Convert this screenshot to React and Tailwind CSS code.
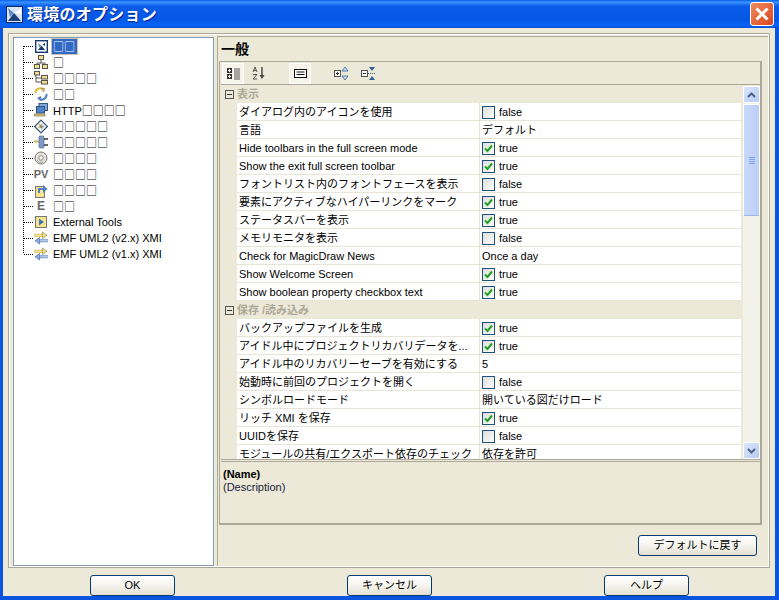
import React from "react";

const displayRows = [
  ["ダイアログ内のアイコンを使用", false],
  ["言語", "デフォルト"],
  ["Hide toolbars in the full screen mode", true],
  ["Show the exit full screen toolbar", true],
  ["フォントリスト内のフォントフェースを表示", false],
  ["要素にアクティブなハイパーリンクをマーク", true],
  ["ステータスバーを表示", true],
  ["メモリモニタを表示", false],
  ["Check for MagicDraw News", "Once a day"],
  ["Show Welcome Screen", true],
  ["Show boolean property checkbox text", true],
];

const saveRows = [
  ["バックアップファイルを生成", true],
  ["アイドル中にプロジェクトリカバリデータを...", true],
  ["アイドル中のリカバリーセーブを有効にする", "5"],
  ["始動時に前回のプロジェクトを開く", false],
  ["シンボルロードモード", "開いている図だけロード"],
  ["リッチ XMI を保存", true],
  ["UUIDを保存", false],
  ["モジュールの共有/エクスポート依存のチェック", "依存を許可"],
];

function TitleIcon() {
  return (
    <svg width="17" height="17" viewBox="0 0 17 17">
      <rect x="0.5" y="0.5" width="16" height="16" fill="#dbe6f5" stroke="#0b2a66" />
      <path d="M2 15 L8 7 L15 15 Z" fill="#1d3f7c" />
      <path d="M2 2 L8 7 L4 11 Z" fill="#5f87c5" />
      <path d="M8 7 L15 3 L15 8 Z" fill="#ffffff" />
    </svg>
  );
}

function Icon({ name }) {
  if (name === "options")
    return (
      <svg width="13" height="13" viewBox="0 0 13 13">
        <rect x="0.7" y="0.7" width="11.6" height="11.6" fill="#fff" stroke="#16396f" strokeWidth="1.4" />
        <path d="M3 10 L6.5 5.5 L10 10 Z" fill="#16396f" />
        <path d="M3 3 L6.5 5.5 L4 7.5 Z" fill="#6f8fbf" />
        <path d="M7.5 4.5 L10 3 L10 6 Z" fill="#16396f" />
      </svg>
    );
  if (name === "hierarchy")
    return (
      <svg width="14" height="14" viewBox="0 0 14 14">
        <path d="M7 5 V8 M3 10 V8 H11 V10" stroke="#555" fill="none" />
        <rect x="4.5" y="0.5" width="5" height="4" fill="#f3dc8b" stroke="#555" />
        <rect x="0.5" y="9.5" width="5" height="4" fill="#f3dc8b" stroke="#555" />
        <rect x="8.5" y="9.5" width="5" height="4" fill="#f3dc8b" stroke="#555" />
      </svg>
    );
  if (name === "tree")
    return (
      <svg width="14" height="14" viewBox="0 0 14 14">
        <path d="M2 4 V11 H7 M2 7 H7" stroke="#555" fill="none" />
        <rect x="0.5" y="0.5" width="5" height="3.5" fill="#f3dc8b" stroke="#555" />
        <rect x="7.5" y="4.5" width="6" height="3.5" fill="#f3dc8b" stroke="#555" />
        <rect x="7.5" y="9.5" width="6" height="3.5" fill="#f3dc8b" stroke="#555" />
      </svg>
    );
  if (name === "refresh")
    return (
      <svg width="14" height="14" viewBox="0 0 14 14" fill="none">
        <path d="M1.5 6 A4.5 4.5 0 0 1 9 2.5" stroke="#e4c23c" strokeWidth="2" />
        <path d="M7 1 L11 1.5 L9.5 5 Z" fill="#e4c23c" stroke="#666" strokeWidth="0.4" />
        <path d="M12.5 7 A5 5 0 0 1 5 12" stroke="#4f7fc4" strokeWidth="2" />
        <path d="M7 9 L3 11 L7 14 Z" fill="#4f7fc4" />
      </svg>
    );
  if (name === "network")
    return (
      <svg width="14" height="14" viewBox="0 0 14 14">
        <rect x="5" y="0.5" width="8.5" height="7" fill="#7fa6dd" stroke="#33557f" />
        <rect x="2.5" y="3.5" width="8" height="6.5" fill="#4f83cc" stroke="#33557f" />
        <path d="M0.5 11 H11 V13 H0.5 Z" fill="#e6d28a" stroke="#7a6a33" strokeWidth="0.7" />
      </svg>
    );
  if (name === "diamond")
    return (
      <svg width="15" height="15" viewBox="0 0 15 15">
        <path d="M7.5 0.7 L14.3 7.5 L7.5 14.3 L0.7 7.5 Z" fill="#f4f1de" stroke="#33557f" strokeWidth="1.2" />
        <path d="M7.5 4 L11 7.5 L7.5 11 Z" fill="#9db7da" />
        <path d="M6 5 L8 9 M5 8 H9" stroke="#8a6a2a" />
      </svg>
    );
  if (name === "plug")
    return (
      <svg width="14" height="14" viewBox="0 0 14 14">
        <path d="M0 6.5 H5" stroke="#c9b65a" strokeWidth="2" />
        <rect x="5" y="1" width="5" height="12" rx="1" fill="#7d9ac4" stroke="#5b6f8f" strokeWidth="0.7" />
        <path d="M10 4 H14 M10 10 H14" stroke="#333" strokeWidth="1.6" />
      </svg>
    );
  if (name === "disc")
    return (
      <svg width="14" height="14" viewBox="0 0 14 14">
        <circle cx="7" cy="7" r="6" fill="#e3e1d8" stroke="#777" />
        <circle cx="7" cy="7" r="2.2" fill="#fff" stroke="#888" />
        <path d="M3 9 A5 5 0 0 0 9 11" stroke="#aaa" fill="none" />
      </svg>
    );
  if (name === "pv")
    return <span className="text-[11px] leading-none font-bold text-[#666] whitespace-nowrap">PV</span>;
  if (name === "e")
    return <span className="text-[12px] leading-none font-bold text-[#666]">E</span>;
  if (name === "export")
    return (
      <svg width="14" height="15" viewBox="0 0 14 15">
        <rect x="1.5" y="3.5" width="9" height="11" fill="#f7e48e" stroke="#777" />
        <path d="M5 10 V6 H9" stroke="#4f7fc4" strokeWidth="2" fill="none" />
        <path d="M9 2 L13.5 6 L9 10 Z" fill="#4f7fc4" />
      </svg>
    );
  if (name === "play")
    return (
      <svg width="14" height="14" viewBox="0 0 14 14">
        <rect x="1.5" y="1.5" width="11" height="11" fill="#f7e48e" stroke="#777" />
        <path d="M5 3.5 L10 7 L5 10.5 Z" fill="#3f73bd" />
      </svg>
    );
  return (
    <svg width="15" height="14" viewBox="0 0 15 14">
      <path d="M0 3 H10 M0 5 H10" stroke="#d8c34a" strokeWidth="1.2" />
      <path d="M9 0.5 L14 4 L9 7.5 Z" fill="#efe08a" stroke="#8c7a2a" strokeWidth="0.6" />
      <path d="M5 9 H15 M5 11 H15" stroke="#6e93c9" strokeWidth="1.2" />
      <path d="M6 6.5 L1 10 L6 13.5 Z" fill="#8fb0de" stroke="#44658f" strokeWidth="0.6" />
    </svg>
  );
}

// prefix is latin text, boxes are the missing-glyph squares of the original
const treeItems = [
  ["options", "", "□□"],
  ["hierarchy", "", "□"],
  ["tree", "", "□□□□"],
  ["refresh", "", "□□"],
  ["network", "HTTP", "□□□□"],
  ["diamond", "", "□□□□□"],
  ["plug", "", "□□□□□"],
  ["disc", "", "□□□□"],
  ["pv", "", "□□□□"],
  ["export", "", "□□□□"],
  ["e", "", "□□"],
  ["play", "External Tools", ""],
  ["emf", "EMF UML2 (v2.x) XMI", ""],
  ["emf", "EMF UML2 (v1.x) XMI", ""],
];

function Tree() {
  return (
    <div className="w-[201px] shrink-0 bg-white border border-[#7f9db9] pl-[9px] flex">
      <svg width="11" height="224" viewBox="0 0 11 224" className="shrink-0">
        <path d="M0.5 8 V216" stroke="#000" strokeDasharray="1 1" />
        {treeItems.map((item, i) => (
          <path key={i} d={`M1 ${8.5 + i * 16} H11`} stroke="#000" strokeDasharray="1 1" />
        ))}
      </svg>
      <div className="flex flex-col">
        {treeItems.map(([icon, prefix, boxes], i) => (
          <div key={i} className="h-4 flex items-center">
            <div className="w-[14px] h-4 flex items-center justify-center shrink-0">
              <Icon name={icon} />
            </div>
            <span
              className={
                "ml-[4px] pl-[1px] pr-[2px] h-[15px] leading-[15px] text-[11px] whitespace-nowrap " +
                (i === 0 ? "bg-[#316ac5] text-white outline outline-[#c6c3b5]" : "text-black")
              }
            >
              {prefix}
              {boxes && <span className="font-['Noto_Sans_CJK_JP',sans-serif]">{boxes}</span>}
            </span>
          </div>
        ))}
      </div>
    </div>
  );
}

function Check({ on }) {
  return (
    <span className="w-[13px] h-[13px] shrink-0 border border-[#1c5180] bg-linear-to-br from-[#dcdcd7] to-white flex items-center justify-center">
      {on && (
        <svg width="9" height="9" viewBox="0 0 9 9">
          <path d="M1 4.5 L3.5 7 L8 1.5" fill="none" stroke="#21a121" strokeWidth="2" />
        </svg>
      )}
    </span>
  );
}

function Row({ name, value }) {
  const isBool = typeof value === "boolean";
  return (
    <div className="h-[18px] shrink-0 flex text-[11px] leading-[16px]">
      <div className="w-[16px] shrink-0 bg-[#ece9d8]" />
      <div className="w-[243px] shrink-0 bg-white border-b border-r border-[#e8e5d6] pl-[2px] pt-[1px] whitespace-nowrap overflow-hidden">
        {name}
      </div>
      <div className="flex-1 bg-white border-b border-[#e8e5d6] pl-[2px] pt-[1px] flex items-center gap-[4px] whitespace-nowrap">
        {isBool ? <Check on={value} /> : null}
        <span>{isBool ? String(value) : value}</span>
      </div>
    </div>
  );
}

function Group({ title }) {
  return (
    <div className="h-[18px] shrink-0 flex items-center bg-[#ece9d8]">
      <span className="w-[9px] h-[9px] ml-[4px] border border-[#555] flex items-center justify-center">
        <span className="w-[5px] h-[1px] bg-[#333]" />
      </span>
      <span className="ml-[3px] text-[11px] font-bold text-[#aca899]">{title}</span>
    </div>
  );
}

function ToolButton({ active, children, className }) {
  return (
    <div
      className={
        "h-[21px] flex items-center justify-center " +
        (active ? "w-[22px] bg-[#f5f3ea] border border-white " : "w-[20px] ") +
        (className || "")
      }
    >
      {children}
    </div>
  );
}

function Toolbar() {
  return (
    <div className="h-[23px] shrink-0 flex items-center pl-[1px] border-b border-[#aca899]">
      <ToolButton active>
        <svg width="13" height="13" viewBox="0 0 13 13">
          <rect x="0" y="1" width="5" height="5" fill="#333" />
          <rect x="0" y="7" width="5" height="5" fill="#333" />
          <path d="M1 3.5 H4 M2.5 2 V5 M1 9.5 H4 M2.5 8 V11" stroke="#fff" />
          <path d="M7 2 H13 M7 4 H13 M7 6 H13 M7 8 H13 M7 10 H13 M7 12 H13" stroke="#555" />
        </svg>
      </ToolButton>
      <ToolButton className="ml-[5px]">
        <svg width="14" height="14" viewBox="0 0 14 14">
          <path d="M1 6 L3 1 L5 6 M2 4.5 H4" stroke="#555" fill="none" />
          <path d="M1 8.5 H5 L1 13 H5" stroke="#555" fill="none" />
          <path d="M10 1 V10" stroke="#444" strokeWidth="1.4" />
          <path d="M7.5 9 H12.5 L10 13 Z" fill="#444" />
        </svg>
      </ToolButton>
      <ToolButton active className="ml-[20px]">
        <svg width="13" height="9" viewBox="0 0 13 9">
          <rect x="0.5" y="0.5" width="12" height="8" fill="#fff" stroke="#111" />
          <path d="M2.5 3 H10.5 M2.5 5.5 H10.5" stroke="#111" />
        </svg>
      </ToolButton>
      <ToolButton className="ml-[21px]">
        <svg width="16" height="15" viewBox="0 0 16 15">
          <rect x="0.5" y="4.5" width="6" height="6" fill="#fff" stroke="#555" />
          <path d="M2 7.5 H5 M3.5 6 V9" stroke="#333" />
          <path d="M8 5 L11 1 L14 5 Z" fill="#cfe0f5" stroke="#2f5f99" strokeWidth="0.8" />
          <path d="M8 10 L11 14 L14 10 Z" fill="#cfe0f5" stroke="#2f5f99" strokeWidth="0.8" />
        </svg>
      </ToolButton>
      <ToolButton className="ml-[7px]">
        <svg width="16" height="15" viewBox="0 0 16 15">
          <rect x="0.5" y="4.5" width="6" height="6" fill="#fff" stroke="#555" />
          <path d="M2 7.5 H5" stroke="#333" />
          <path d="M8 1 L11 5 L14 1 Z" fill="#2f5f99" />
          <path d="M8 14 L11 10 L14 14 Z" fill="#2f5f99" />
          <path d="M7 7.5 H15" stroke="#2f5f99" strokeDasharray="1 1" />
        </svg>
      </ToolButton>
    </div>
  );
}

function ScrollButton({ down }) {
  return (
    <div className="h-[17px] shrink-0 rounded-[2px] border border-white bg-linear-to-br from-[#dbe6fb] to-[#b6ccf6] flex items-center justify-center">
      <svg width="9" height="6" viewBox="0 0 9 6">
        <path
          d={down ? "M1 1 L4.5 4.5 L8 1" : "M1 5 L4.5 1.5 L8 5"}
          fill="none"
          stroke="#4d6185"
          strokeWidth="2"
        />
      </svg>
    </div>
  );
}

function Scrollbar() {
  return (
    <div className="w-[17px] ml-[2px] shrink-0 flex flex-col bg-[#f3f2ea] mt-[1px]">
      <ScrollButton />
      <div className="h-[112px] shrink-0 mt-[1px] rounded-[2px] border border-white border-b-[#9ab4e6] bg-linear-to-r from-[#c9d8fa] to-[#bdcff8] flex flex-col items-center justify-center gap-[1px]">
        <span className="w-[6px] h-[1px] bg-[#7fa4ee]" />
        <span className="w-[6px] h-[1px] bg-[#7fa4ee]" />
        <span className="w-[6px] h-[1px] bg-[#7fa4ee]" />
        <span className="w-[6px] h-[1px] bg-[#7fa4ee]" />
      </div>
      <div className="flex-1" />
      <ScrollButton down />
    </div>
  );
}

function PropertyTable() {
  return (
    <div className="h-[375px] shrink-0 flex border-b border-[#aca899] overflow-hidden">
      <div className="w-[520px] shrink-0 flex flex-col overflow-hidden">
        <Group title="表示" />
        {displayRows.map(([n, v]) => (
          <Row key={n} name={n} value={v} />
        ))}
        <Group title="保存 /読み込み" />
        {saveRows.map(([n, v]) => (
          <Row key={n} name={n} value={v} />
        ))}
      </div>
      <Scrollbar />
    </div>
  );
}

function XpButton({ children, className }) {
  return (
    <button className={"h-[21px] rounded-[3px] border border-[#003c74] bg-linear-to-b from-white via-[#f5f4ee] to-[#e3e0d2] text-[11px] leading-none text-black " + (className || "")}>
      {children}
    </button>
  );
}

export default function App() {
  return (
    <div className="w-[779px] h-[600px] overflow-hidden flex flex-col bg-[#0a55e0] text-black font-['Liberation_Sans','Noto_Sans_CJK_JP',sans-serif]">
      <div className="h-[28px] shrink-0 flex items-center pl-[6px] pr-[5px] bg-[linear-gradient(180deg,#0a5fe6_0%,#3a93ff_8%,#0a5ce8_22%,#0458e6_70%,#0a63f2_90%,#0551d8_100%)]">
        <TitleIcon />
        <span className="ml-[4px] mt-[1px] text-[16px] font-bold text-white leading-none tracking-[0.25px] [text-shadow:1px_1px_0_#0b2a8a]">
          環境のオプション
        </span>
        <div className="ml-auto w-[24px] h-[24px] rounded-[3px] border border-white bg-linear-to-br from-[#ee8a5e] to-[#d9431c] flex items-center justify-center">
          <svg width="16" height="16" viewBox="0 0 16 16">
            <path d="M2.5 2.5 L13.5 13.5 M13.5 2.5 L2.5 13.5" stroke="#fff" strokeWidth="3" />
          </svg>
        </div>
      </div>

      <div className="flex-1 min-h-0 ml-[3px] mr-[4px] mb-[4px] bg-[#ece9d8] flex flex-col pt-[5px] px-[5px]">
        <div className="h-[535px] w-[762px] shrink-0 flex border border-[#aca899] outline outline-white -outline-offset-2 pt-[3px] pl-[4px] pr-[1px] pb-[1px]">
          <Tree />
          <div className="flex-1 min-w-0 ml-[3px] flex flex-col border-l border-t border-[#aca899] -mt-[1px] pl-[1px]">
            <div className="h-[24px] shrink-0 flex items-center pl-[2px] text-[14px] font-bold leading-none">
              一般
            </div>
            <div className="w-[543px] h-[464px] shrink-0 flex flex-col border border-[#aca899] border-r-2 border-b-2 pl-[1px]">
              <Toolbar />
              <PropertyTable />
              <div className="flex-1 border-t border-[#aca899] mt-[1px] pt-[6px] pl-[2px] text-[11px] leading-[13px]">
                <div className="font-bold">(Name)</div>
                <div className="text-[#1a1a40]">(Description)</div>
              </div>
            </div>
            <div className="flex justify-end pr-[11px] pt-[10px]">
              <XpButton className="w-[119px]">デフォルトに戻す</XpButton>
            </div>
          </div>
        </div>
        <div className="flex pt-[7px]">
          <XpButton className="w-[85px] ml-[82px]">OK</XpButton>
          <XpButton className="w-[85px] ml-[172px]">キャンセル</XpButton>
          <XpButton className="w-[85px] ml-[172px]">ヘルプ</XpButton>
        </div>
      </div>
    </div>
  );
}
